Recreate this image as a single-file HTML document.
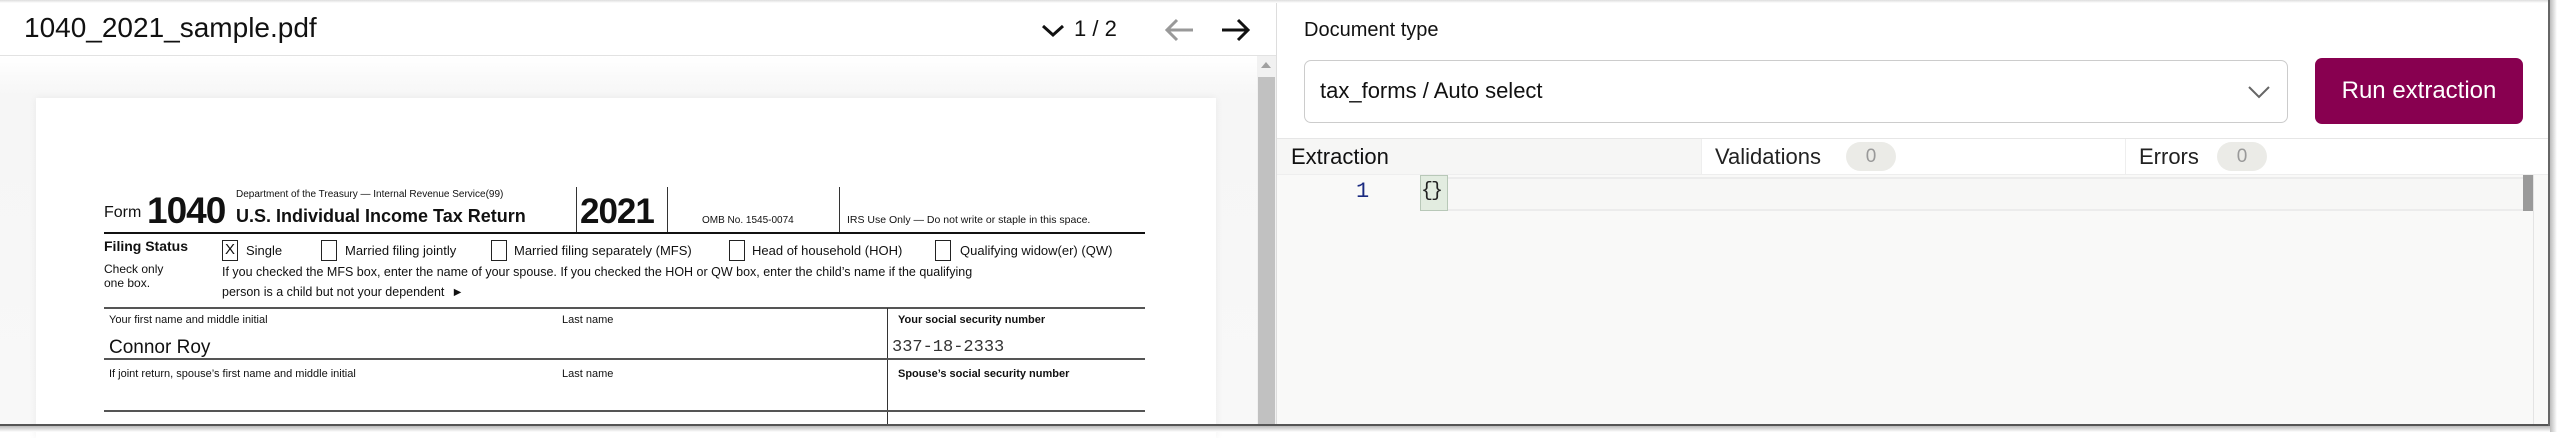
<!DOCTYPE html>
<html><head><meta charset="utf-8"><style>
*{box-sizing:border-box;margin:0;padding:0}
body{width:2557px;height:432px;overflow:hidden;background:#fff;font-family:"Liberation Sans",sans-serif;color:#111;position:relative}
.a{position:absolute;white-space:nowrap}
.f{font-family:"Liberation Sans Narrow","Liberation Sans",sans-serif}
.box{position:absolute;width:16px;height:21px;border:1.5px solid #222}
.hl{position:absolute;background:#333}
</style></head><body>
<div class="a" style="left:0;top:0;width:1277px;height:56px;border-bottom:1px solid #e2e2e2;background:#fff"></div>
<div class="a" style="left:24px;top:12px;font-size:28px;color:#111">1040_2021_sample.pdf</div>
<svg class="a" style="left:1040px;top:22px" width="26" height="18" viewBox="0 0 26 18"><path d="M3 4 L13 13 L23 4" fill="none" stroke="#111" stroke-width="3"/></svg>
<div class="a" style="left:1074px;top:16px;font-size:22px">1 / 2</div>
<svg class="a" style="left:1163px;top:17px" width="32" height="26" viewBox="0 0 32 26"><path d="M30 13 H4 M14 3 L4 13 L14 23" fill="none" stroke="#999" stroke-width="3"/></svg>
<svg class="a" style="left:1220px;top:17px" width="32" height="26" viewBox="0 0 32 26"><path d="M2 13 H28 M18 3 L28 13 L18 23" fill="none" stroke="#111" stroke-width="3"/></svg>
<div class="a" style="left:0;top:56px;width:1257px;height:370px;background:linear-gradient(#fff,#f6f6f6 40px,#f8f8f8)"></div>
<div class="a" style="left:1257px;top:56px;width:19px;height:370px;background:#f1f1f1"></div>
<div class="a" style="left:1261px;top:62px;width:0;height:0;border-left:5px solid transparent;border-right:5px solid transparent;border-bottom:6px solid #a0a0a0"></div>
<div class="a" style="left:1258px;top:77px;width:17px;height:350px;background:#c1c1c1"></div>
<div class="a" style="left:36px;top:98px;width:1180px;height:340px;background:#fff;box-shadow:0 0 8px rgba(0,0,0,.06)"></div>
<div class="hl" style="left:576px;top:187px;width:1px;height:46px"></div>
<div class="hl" style="left:667px;top:187px;width:1px;height:46px"></div>
<div class="hl" style="left:839px;top:187px;width:1px;height:46px"></div>
<div class="hl" style="left:104px;top:232px;width:1041px;height:2px;background:#111"></div>
<div class="a f" style="left:104px;top:204px;font-size:16px">Form</div>
<div class="a f" style="left:147px;top:190px;font-size:37px;font-weight:bold;letter-spacing:-1px">1040</div>
<div class="a f" style="left:236px;top:189px;font-size:10px">Department of the Treasury — Internal Revenue Service(99)</div>
<div class="a f" style="left:236px;top:206px;font-size:18px;font-weight:bold">U.S. Individual Income Tax Return</div>
<div class="a f" style="left:580px;top:192px;font-size:35px;font-weight:bold;letter-spacing:-1px">2021</div>
<div class="a f" style="left:702px;top:215px;font-size:10px">OMB No. 1545-0074</div>
<div class="a f" style="left:847px;top:214px;font-size:10.5px">IRS Use Only — Do not write or staple in this space.</div>
<div class="a f" style="left:104px;top:238px;font-size:14px;font-weight:bold">Filing Status</div>
<div class="box" style="left:222px;top:240px"></div><div class="a f" style="left:225px;top:241px;font-size:15px">X</div>
<div class="a f" style="left:246px;top:243px;font-size:13px">Single</div>
<div class="box" style="left:321px;top:240px"></div><div class="a f" style="left:345px;top:243px;font-size:13px">Married filing jointly</div>
<div class="box" style="left:491px;top:240px"></div><div class="a f" style="left:514px;top:243px;font-size:13px">Married filing separately (MFS)</div>
<div class="box" style="left:729px;top:240px"></div><div class="a f" style="left:752px;top:243px;font-size:13px">Head of household (HOH)</div>
<div class="box" style="left:935px;top:240px"></div><div class="a f" style="left:960px;top:243px;font-size:13px">Qualifying widow(er) (QW)</div>
<div class="a f" style="left:104px;top:262px;font-size:12px;line-height:14px">Check only<br>one box.</div>
<div class="a f" style="left:222px;top:265px;font-size:12.5px">If you checked the MFS box, enter the name of your spouse. If you checked the HOH or QW box, enter the child’s name if the qualifying</div>
<div class="a f" style="left:222px;top:285px;font-size:12.5px">person is a child but not your dependent &nbsp;►</div>
<div class="hl" style="left:104px;top:307px;width:1041px;height:2px;background:#555"></div>
<div class="hl" style="left:887px;top:308px;width:1px;height:120px"></div>
<div class="a f" style="left:109px;top:314px;font-size:11px">Your first name and middle initial</div>
<div class="a f" style="left:562px;top:314px;font-size:11px">Last name</div>
<div class="a f" style="left:898px;top:314px;font-size:11px;font-weight:bold">Your social security number</div>
<div class="a f" style="left:109px;top:337px;font-size:19px">Connor Roy</div>
<div class="a" style="left:892px;top:338px;font-size:17px;font-family:'Liberation Mono',monospace;color:#333">337-18-2333</div>
<div class="hl" style="left:104px;top:358px;width:1041px;height:2px;background:#555"></div>
<div class="a f" style="left:109px;top:368px;font-size:11px">If joint return, spouse’s first name and middle initial</div>
<div class="a f" style="left:562px;top:368px;font-size:11px">Last name</div>
<div class="a f" style="left:898px;top:368px;font-size:11px;font-weight:bold">Spouse’s social security number</div>
<div class="hl" style="left:104px;top:410px;width:1041px;height:2px;background:#555"></div>
<div class="a" style="left:1276px;top:0;width:1px;height:432px;background:#ddd"></div>
<div class="a" style="left:1304px;top:19px;font-size:20px;font-weight:500">Document type</div>
<div class="a" style="left:1304px;top:60px;width:984px;height:63px;border:1.5px solid #ccc;border-radius:7px"></div>
<div class="a" style="left:1320px;top:78px;font-size:22px">tax_forms / Auto select</div>
<svg class="a" style="left:2247px;top:84px" width="24" height="16" viewBox="0 0 24 16"><path d="M2 3 L12 13 L22 3" fill="none" stroke="#666" stroke-width="2"/></svg>
<div class="a" style="left:2315px;top:58px;width:208px;height:66px;background:#880050;border-radius:7px;color:#fff;font-size:24px;text-align:center;line-height:66px">Run extraction</div>
<div class="a" style="left:1277px;top:138px;width:1271px;height:1px;background:#e6e6e6"></div>
<div class="a" style="left:1277px;top:139px;width:424px;height:36px;background:#f6f6f5"></div>
<div class="a" style="left:1701px;top:139px;width:1px;height:36px;background:#eee"></div>
<div class="a" style="left:2125px;top:139px;width:1px;height:36px;background:#eee"></div>
<div class="a" style="left:1291px;top:144px;font-size:22px">Extraction</div>
<div class="a" style="left:1715px;top:144px;font-size:22px;color:#222">Validations</div>
<div class="a" style="left:1846px;top:142px;width:50px;height:29px;border-radius:15px;background:#ebebe7;color:#999;font-size:19px;text-align:center;line-height:29px">0</div>
<div class="a" style="left:2139px;top:144px;font-size:22px;color:#222">Errors</div>
<div class="a" style="left:2217px;top:142px;width:50px;height:29px;border-radius:15px;background:#ebebe7;color:#999;font-size:19px;text-align:center;line-height:29px">0</div>
<div class="a" style="left:1277px;top:174px;width:1271px;height:254px;background:#f9f9f8;border-top:1px solid #eee"></div>
<div class="a" style="left:1420px;top:177px;width:1103px;height:34px;border-top:2px solid #ececec;border-bottom:2px solid #ececec;background:#f7f7f6"></div>
<div class="a" style="left:1356px;top:179px;font-size:22px;font-family:'Liberation Mono',monospace;color:#1a2a80">1</div>
<div class="a" style="left:1420px;top:175px;width:28px;height:36px;background:#e2ece0;border:1px solid #b8c8b8"></div>
<div class="a" style="left:1421px;top:180px;font-size:20px;font-family:'Liberation Mono',monospace;color:#222;letter-spacing:-2px">{}</div>
<div class="a" style="left:2523px;top:175px;width:10px;height:36px;background:#9a9a9a"></div>
<div class="a" style="left:2533px;top:175px;width:1px;height:252px;background:#e4e4e4"></div>
<div class="a" style="left:0;top:0;width:2557px;height:3px;background:linear-gradient(#ddd,#fff)"></div>
<div class="a" style="left:0;top:424px;width:2550px;height:2px;background:#555"></div>
<div class="a" style="left:0;top:426px;width:2557px;height:6px;background:linear-gradient(#bbb,#fff)"></div>
<div class="a" style="left:2548px;top:0;width:2px;height:426px;background:#666"></div>
<div class="a" style="left:2550px;top:0;width:7px;height:432px;background:linear-gradient(90deg,#bbb,#fff)"></div>
</body></html>
